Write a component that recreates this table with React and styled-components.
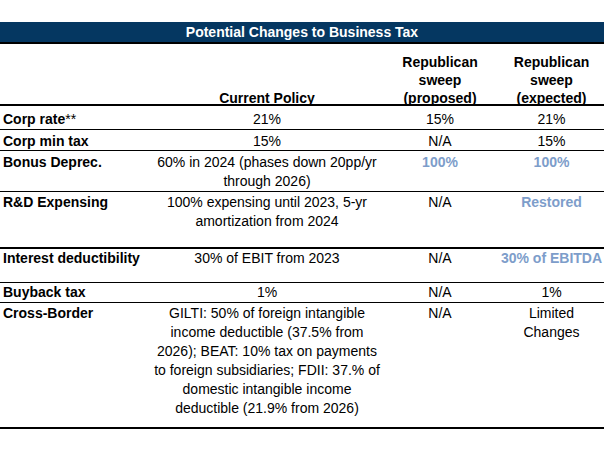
import React from 'react';
import styled, { createGlobalStyle } from 'styled-components';

const GlobalStyle = createGlobalStyle`
  body {
    margin: 0;
    background: #fff;
    font-family: "Liberation Sans", Arial, sans-serif;
    color: #000;
  }
`;

const Sheet = styled.div`
  width: 604px;
  padding-top: 22px;
  font-size: 14px;
`;

const TitleBar = styled.div`
  height: 20px;
  line-height: 20px;
  background-color: #053761;
  color: #fff;
  font-weight: bold;
  text-align: center;
  border-bottom: 2px solid #000;
`;

const Row = styled.div`
  display: grid;
  grid-template-columns: 153px 228px 118px 105px;
  height: ${(p) => p.$h}px;
  padding-top: ${(p) => p.$pad || 0}px;
  box-sizing: border-box;
  border-bottom: ${(p) => (p.$thick ? 2 : 1)}px solid #000;
  line-height: 19px;
`;

const HeadRow = styled(Row)`
  line-height: 18px;
  font-weight: bold;
`;

const HeadCell = styled.div`
  align-self: end;
  margin-bottom: -3px;
  text-align: center;
`;

const Label = styled.div`
  padding-left: 3px;
  font-weight: bold;
  white-space: nowrap;
`;

const Stars = styled.span`
  font-weight: normal;
`;

const Value = styled.div`
  text-align: center;
  white-space: nowrap;
  font-weight: ${(p) => (p.$accent ? 'bold' : 'normal')};
  color: ${(p) => (p.$accent ? '#7d9dca' : '#000')};
`;

const rows = [
  { h: 24, pad: 4, label: 'Corp rate', stars: true, cur: ['21%'], pro: '15%', exp: '21%' },
  { h: 21, pad: 2, label: 'Corp min tax', cur: ['15%'], pro: 'N/A', exp: '15%' },
  {
    h: 41, pad: 2, label: 'Bonus Deprec.',
    cur: ['60% in 2024 (phases down 20pp/yr', 'through 2026)'],
    pro: '100%', proAccent: true, exp: '100%', expAccent: true,
  },
  {
    h: 57, pad: 1, thick: true, label: 'R&D Expensing',
    cur: ['100% expensing until 2023, 5-yr', 'amortization from 2024'],
    pro: 'N/A', exp: 'Restored', expAccent: true,
  },
  { h: 34, pad: 0, label: 'Interest deductibility', cur: ['30% of EBIT from 2023'], pro: 'N/A', exp: '30% of EBITDA', expAccent: true },
  { h: 20, pad: 0, label: 'Buyback tax', cur: ['1%'], pro: 'N/A', exp: '1%' },
  {
    h: 126, pad: 1, thick: true, label: 'Cross-Border',
    cur: [
      'GILTI: 50% of foreign intangible',
      'income deductible (37.5% from',
      '2026); BEAT: 10% tax on payments',
      'to foreign subsidiaries; FDII: 37.% of',
      'domestic intangible income',
      'deductible (21.9% from 2026)',
    ],
    pro: 'N/A', exp: ['Limited', 'Changes'],
  },
];

const Lines = ({ items }) =>
  [].concat(items).map((t, i, arr) => (
    <React.Fragment key={i}>
      {t}
      {i < arr.length - 1 && <br />}
    </React.Fragment>
  ));

export default function App() {
  return (
    <Sheet>
      <GlobalStyle />
      <TitleBar>Potential Changes to Business Tax</TitleBar>
      <HeadRow $h={62} $thick>
        <HeadCell />
        <HeadCell>Current Policy</HeadCell>
        <HeadCell>Republican<br />sweep<br />(proposed)</HeadCell>
        <HeadCell>Republican<br />sweep<br />(expected)</HeadCell>
      </HeadRow>
      {rows.map((r) => (
        <Row key={r.label} $h={r.h} $pad={r.pad} $thick={r.thick}>
          <Label>
            {r.label}
            {r.stars && <Stars>**</Stars>}
          </Label>
          <Value><Lines items={r.cur} /></Value>
          <Value $accent={r.proAccent}><Lines items={r.pro} /></Value>
          <Value $accent={r.expAccent}><Lines items={r.exp} /></Value>
        </Row>
      ))}
    </Sheet>
  );
}
